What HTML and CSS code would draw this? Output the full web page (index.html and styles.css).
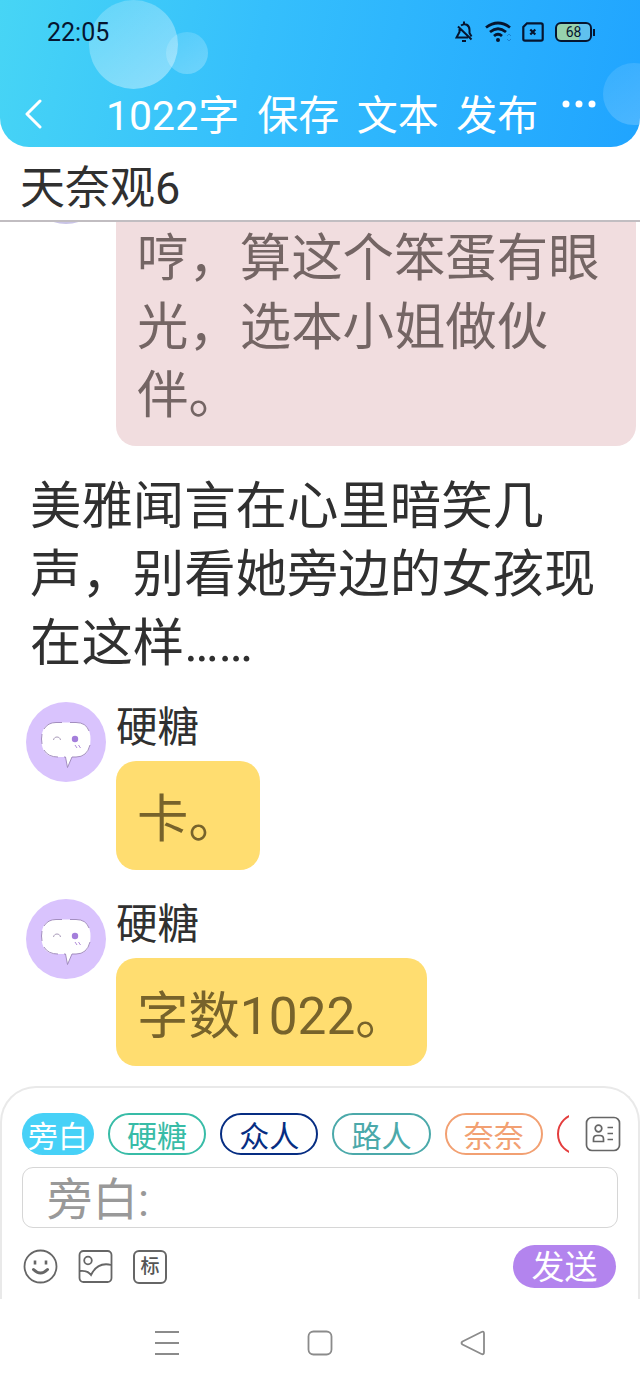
FILE: index.html
```html
<!DOCTYPE html>
<html lang="zh-CN">
<head>
<meta charset="utf-8">
<title>天奈观6</title>
<link rel="stylesheet" href="styles.css">
</head>
<body>
<svg class="defs" width="0" height="0">
  <symbol id="avatar" viewBox="0 0 80 80">
    <circle cx="40" cy="40" r="40" fill="#d9c3fd"/>
    <path d="M30 20.500H50Q64.500 20.500 64.500 37.500Q64.500 55 50 55H46L41.500 65.500L39.500 55H30Q15.500 55 15.500 37.500Q15.500 20.500 30 20.500Z" fill="#fff"/>
    <path d="M18 27Q22 20.500 30 20.500H36M44 20.500H50Q60 20.500 63 29M64 43Q61 55 50 55H46L41.500 65.500L39.500 55H38M32 55Q22 55 18 48M16 42Q15 37 16 32" fill="none" stroke="#9b85b8" stroke-width=".9"/>
    <path d="M27.500 38C28 34 34 34 34.500 38" fill="none" stroke="#a99bb9" stroke-width="1"/>
    <circle cx="49" cy="37" r="3.200" fill="#a47edb"/>
    <path d="M49 43l2 3M52.500 43l2 3" stroke="#b18bd9" stroke-width="1"/>
  </symbol>
</svg>
<div class="phone">
  <header class="header">
    <i class="bubble-deco deco-large"></i><i class="bubble-deco deco-small"></i><i class="bubble-deco deco-edge"></i>
    <div class="status">
      <span class="time">22:05</span>
      <div class="status-icons">
        <svg width="18" height="22" viewBox="0 0 18 22" fill="none" stroke="#06152f" stroke-width="2"><path d="M4.500 8V11L1.500 16.500H13M6 4.500C10 1.500 14.500 4 14.500 9V12L16.500 15.500M9 3V.500M3 5.500L16.500 18.500M7 20H11"/></svg>
        <svg width="26" height="22" viewBox="0 0 26 22" fill="none" stroke="#06152f" stroke-width="2.800"><path d="M1 6.500Q13-2.500 25 6.500M5 11Q13 4.500 21 11M9 15Q13 11.500 17 15"/><circle cx="13" cy="19" r="2" fill="#06152f" stroke="none"/><path d="M22 15l2-2 2 2M22 18l2 2 2-2" stroke="#1684d5" stroke-width="1"/></svg>
        <svg width="22" height="20" viewBox="0 0 22 20" fill="none" stroke="#06152f" stroke-width="2.200"><path d="M5 1.300H19Q20.700 1.300 20.700 3V17Q20.700 18.700 19 18.700H3Q1.300 18.700 1.300 17V5Z"/><path d="M8.300 7.500l5 5M13.300 7.500l-5 5"/></svg>
        <div class="battery">68</div>
      </div>
    </div>
    <nav class="toolbar">
      <svg class="back" width="18" height="30" viewBox="0 0 18 30"><path d="M15 2L2 15L15 28" fill="none" stroke="#fff" stroke-width="3" stroke-linecap="round" stroke-linejoin="round"/></svg>
      <span class="count">1022字</span><span>保存</span><span>文本</span><span>发布</span>
      <svg class="more" width="34" height="8" viewBox="0 0 34 8" fill="#fff"><circle cx="4" cy="4" r="3.500"/><circle cx="17" cy="4" r="3.500"/><circle cx="30" cy="4" r="3.500"/></svg>
    </nav>
  </header>
  <h1 class="title">天奈观6</h1>
  <main class="chat">
    <div class="message clipped">
      <svg class="avatar prior" viewBox="0 0 80 80"><circle cx="40" cy="40" r="40" fill="#c9c4e6"/></svg>
      <div class="body"><div class="speech pink">哼，算这个笨蛋有眼光，选本小姐做伙伴。</div></div>
    </div>
    <p class="narration">美雅闻言在心里暗笑几声，别看她旁边的女孩现在这样……</p>
    <div class="message">
      <svg class="avatar"><use href="#avatar"/></svg>
      <div class="body"><div class="name">硬糖</div><div class="speech">卡。</div></div>
    </div>
    <div class="message">
      <svg class="avatar"><use href="#avatar"/></svg>
      <div class="body"><div class="name">硬糖</div><div class="speech">字数1022。</div></div>
    </div>
  </main>
  <section class="composer">
    <div class="roles-row">
      <div class="roles">
        <span class="role active">旁白</span><span class="role green">硬糖</span><span class="role navy">众人</span><span class="role teal">路人</span><span class="role orange">奈奈</span><span class="role red"></span>
      </div>
      <svg class="contacts" width="36" height="36" viewBox="0 0 36 36" fill="none" stroke="#666" stroke-width="1.700"><rect x="1.500" y="1.500" width="33" height="33" rx="5.500"/><circle cx="13.500" cy="12.500" r="3.300"/><path d="M8.500 25.500V23Q8.500 19.500 12 19.500H15Q18.500 19.500 18.500 23V25.500ZM22.500 11.500H28M22.500 17.500H28M22.500 23.500H28"/></svg>
    </div>
    <div class="input">旁白:</div>
    <div class="actions">
      <svg width="36" height="36" viewBox="0 0 36 36" fill="none" stroke="#666" stroke-width="1.800"><circle cx="18.500" cy="17.500" r="16"/><path d="M13 11.500V15.500M24 11.500V15.500" stroke-width="2.600"/><path d="M11.500 20.500Q18.500 27.500 25.500 20.500" stroke-width="3" stroke-linecap="round"/></svg>
      <svg width="36" height="36" viewBox="0 0 36 36" fill="none" stroke="#666" stroke-width="1.800"><rect x="2.500" y="2" width="32" height="31" rx="4"/><circle cx="11" cy="11.500" r="3.800"/><path d="M2.500 22Q10.500 21 14 26Q20.500 12.500 34.500 16"/></svg>
      <span class="tag">标</span>
      <button class="send">发送</button>
    </div>
  </section>
  <footer class="navbar">
    <svg width="26" height="26" viewBox="0 0 26 26" stroke="#8b8b8b" stroke-width="2"><path d="M1 2H25M1 13H25M1 24H25"/></svg>
    <svg width="26" height="26" viewBox="0 0 26 26" fill="none" stroke="#8b8b8b" stroke-width="1.800"><rect x="1.500" y="1.500" width="23" height="23" rx="5"/></svg>
    <svg width="26" height="26" viewBox="0 0 26 26" fill="none" stroke="#8b8b8b" stroke-width="1.800"><path d="M2.500 11.500L21.500 2Q24 1 24 3.500V22Q24 25 21.500 24L2.500 14.500Q.500 13 2.500 11.500Z"/></svg>
  </footer>
</div>
</body>
</html>
```
FILE: styles.css
```css
* { box-sizing: border-box; }
body { margin: 0; background: #fff; font-family: Roboto, "Noto Sans CJK SC", sans-serif; color: #303030; }
.defs { display: block; height: 0; }
.phone { width: 640px; height: 1387px; display: flex; flex-direction: column; overflow: hidden; }
.phone svg { flex-shrink: 0; }
.header { position: relative; height: 147px; flex-shrink: 0; overflow: hidden; border-radius: 0 0 29px 29px; background: linear-gradient(102deg, #47d5f5 0%, #35bffc 40%, #20a4ff 100%); }
.bubble-deco { position: absolute; border-radius: 50%; background: linear-gradient(145deg, rgba(255,255,255,.18), rgba(255,255,255,.42)); }
.deco-large { left: 89px; top: 0; width: 89px; height: 89px; }
.deco-small { left: 166px; top: 32px; width: 42px; height: 42px; opacity: .65; }
.deco-edge { left: 603px; top: 63px; width: 62px; height: 62px; opacity: .5; }
.status { position: relative; display: flex; justify-content: space-between; align-items: center; height: 64px; padding: 0 46px 0 47px; color: #06152f; }
.time { padding-top: 1px; font-size: 25px; line-height: 30px; }
.status-icons { display: flex; align-items: center; gap: 11px; }
.status-icons svg:first-child { margin-right: 1px; }
.battery { position: relative; width: 37px; height: 20px; margin-right: 2px; border: 2px solid #06152f; border-radius: 6px; background: linear-gradient(90deg, #96d2ad 68%, #5fc0ee 68%); font-size: 14px; line-height: 16px; text-align: center; }
.battery::after { content: ""; position: absolute; right: -5px; top: 5px; width: 2px; height: 7px; background: #06152f; }
.toolbar { position: relative; display: flex; height: 83px; padding: 20px 43px 0 24px; color: #fff; font-size: 41px; line-height: 65px; white-space: nowrap; }
.toolbar span { margin-right: 17.500px; }
.toolbar .count { margin-right: 18px; }
.back { margin: 15px 63px 0 1px; }
.more { margin: 16px 0 0 6px; }
.title { height: 75px; flex-shrink: 0; margin: 0; padding: 7px 20px 0; border-bottom: 2px solid #c1bdc1; font-size: 45px; font-weight: 400; line-height: 70px; }
.chat { flex: 1; min-height: 0; display: flex; flex-direction: column; justify-content: flex-end; overflow: hidden; padding-bottom: 20px; }
.message { display: flex; flex-shrink: 0; gap: 10px; padding: 0 4px 0 26px; margin-bottom: 27px; }
.message:last-child { margin-bottom: 0; }
.avatar { width: 80px; height: 80px; margin-top: 2px; }
.clipped { margin-bottom: 27px; }
.prior { margin-top: -56px; align-self: flex-start; }
.body { display: flex; flex-direction: column; align-items: flex-start; min-width: 0; }
.name { height: 61px; padding-top: 2px; font-size: 41.500px; line-height: 51px; }
.speech { padding: 25px 20px 15px 21px; border-radius: 20px; background: #ffdd70; color: #77632b; font-size: 51.400px; line-height: 68.500px; }
.speech.pink { background: #f1dddf; color: #746564; }
.narration { flex-shrink: 0; margin: 0 0 22px; padding: 0 30px; font-size: 51.400px; line-height: 68.500px; }
.composer { height: 213px; flex-shrink: 0; padding: 25px 20px 0 20px; border: 2px solid #e9e9e9; border-bottom: 0; border-radius: 36px 36px 0 0; }
.roles-row { display: flex; align-items: center; justify-content: space-between; height: 42px; }
.contacts { margin-right: -3px; }
.roles { display: flex; gap: 14px; width: 547px; height: 42px; overflow: hidden; }
.role { width: 98.200px; height: 42px; flex-shrink: 0; border: 2px solid; border-radius: 21px; text-align: center; font-size: 30px; line-height: 43px; }
.active { width: 72px; border: 0; background: #47d1f7; color: #fff; line-height: 47px; }
.green { color: #38bca7; }
.navy { color: #062d82; }
.teal { color: #4ba9aa; }
.orange { color: #f2a072; }
.red { color: #e43d3d; }
.input { height: 61px; margin-top: 12px; padding-left: 24px; border: 1.500px solid #d6d6d6; border-radius: 11px; color: #999; font-size: 45.500px; line-height: 65px; }
.actions { display: flex; align-items: center; gap: 19px; margin-top: 17px; height: 43px; }
.tag { width: 34px; height: 34px; margin-left: 1px; border: 2px solid #666; border-radius: 6px; color: #555; text-align: center; font-size: 19px; font-weight: 500; line-height: 30px; }
.send { width: 103px; height: 43px; margin: 0 2px 0 auto; padding: 3px 0 0; border: 0; border-radius: 22px; background: #b384ee; color: #fff; font: 33px/40px Roboto, "Noto Sans CJK SC", sans-serif; }
.navbar { display: flex; height: 88px; flex-shrink: 0; align-items: center; justify-content: space-between; padding: 0 154px; }
```
